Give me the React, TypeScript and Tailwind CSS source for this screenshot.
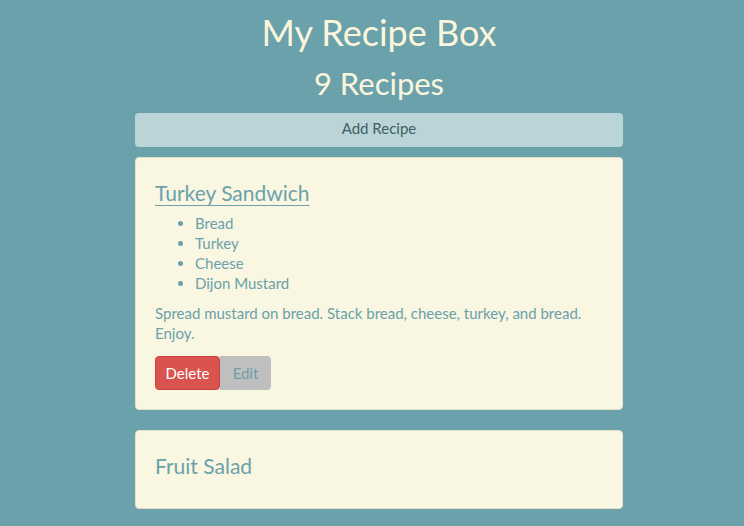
import React from "react";

const font = { fontFamily: '"Lato", "Open Sans", sans-serif' };

interface Recipe {
    name: string;
    ingredients: string[];
    directions: string;
    open?: boolean;
}

const recipes: Recipe[] = [
    {
        name: "Turkey Sandwich",
        ingredients: ["Bread", "Turkey", "Cheese", "Dijon Mustard"],
        directions: "Spread mustard on bread. Stack bread, cheese, turkey, and bread. Enjoy.",
        open: true,
    },
    { name: "Fruit Salad", ingredients: [], directions: "" },
];

function RecipeCard({ recipe }: { recipe: Recipe }) {
    if (!recipe.open) {
        return (
            <div className="mt-[20px] h-[79px] rounded border border-[#e3e0cc] bg-[#f9f6e1] px-[19px] pb-[8px] flex items-center">
                <h3 className="text-[21px] leading-none text-[#6ba1ab]">{recipe.name}</h3>
            </div>
        );
    }
    return (
        <div className="mt-[10px] rounded border border-[#e3e0cc] bg-[#f9f6e1] px-[19px] pt-[21px] pb-[19px] text-[#6ba1ab]">
            <h3 className="text-[21px] leading-[28px] underline underline-offset-[4px] decoration-1">{recipe.name}</h3>
            <ul className="list-disc pl-[40px] mt-[6px] text-[15px] leading-[20px]">
                {recipe.ingredients.map((i) => (
                    <li key={i}>{i}</li>
                ))}
            </ul>
            <p className="mt-[10px] text-[15px] leading-[20px]">{recipe.directions}</p>
            <div className="mt-[13px] flex">
                <button className="h-[34px] w-[65px] rounded border border-[#c9403c] bg-[#d9534f] text-[15px] text-white">Delete</button>
                <button className="h-[34px] w-[51px] rounded-r bg-[#bfbfbf] text-[15px] text-[#6ba1ab]">Edit</button>
            </div>
        </div>
    );
}

export default function App() {
    return (
        <div className="min-h-screen bg-[#6ba1ab]" style={font}>
            <div className="ml-[135px] w-[488px] pt-[6px]">
                <h1 className="text-center text-[36px] leading-[52px] text-[#faf6dc]">My Recipe Box</h1>
                <h2 className="text-center text-[31px] leading-[46px] text-[#faf6dc] mt-[2px]">{`${9} Recipes`}</h2>
                <button className="mt-[7px] h-[34px] w-full rounded bg-[#bbd4d8] pb-[3px] text-[15px] text-[#3e5f66]">Add Recipe</button>
                {recipes.map((r) => (
                    <RecipeCard key={r.name} recipe={r} />
                ))}
            </div>
        </div>
    );
}
